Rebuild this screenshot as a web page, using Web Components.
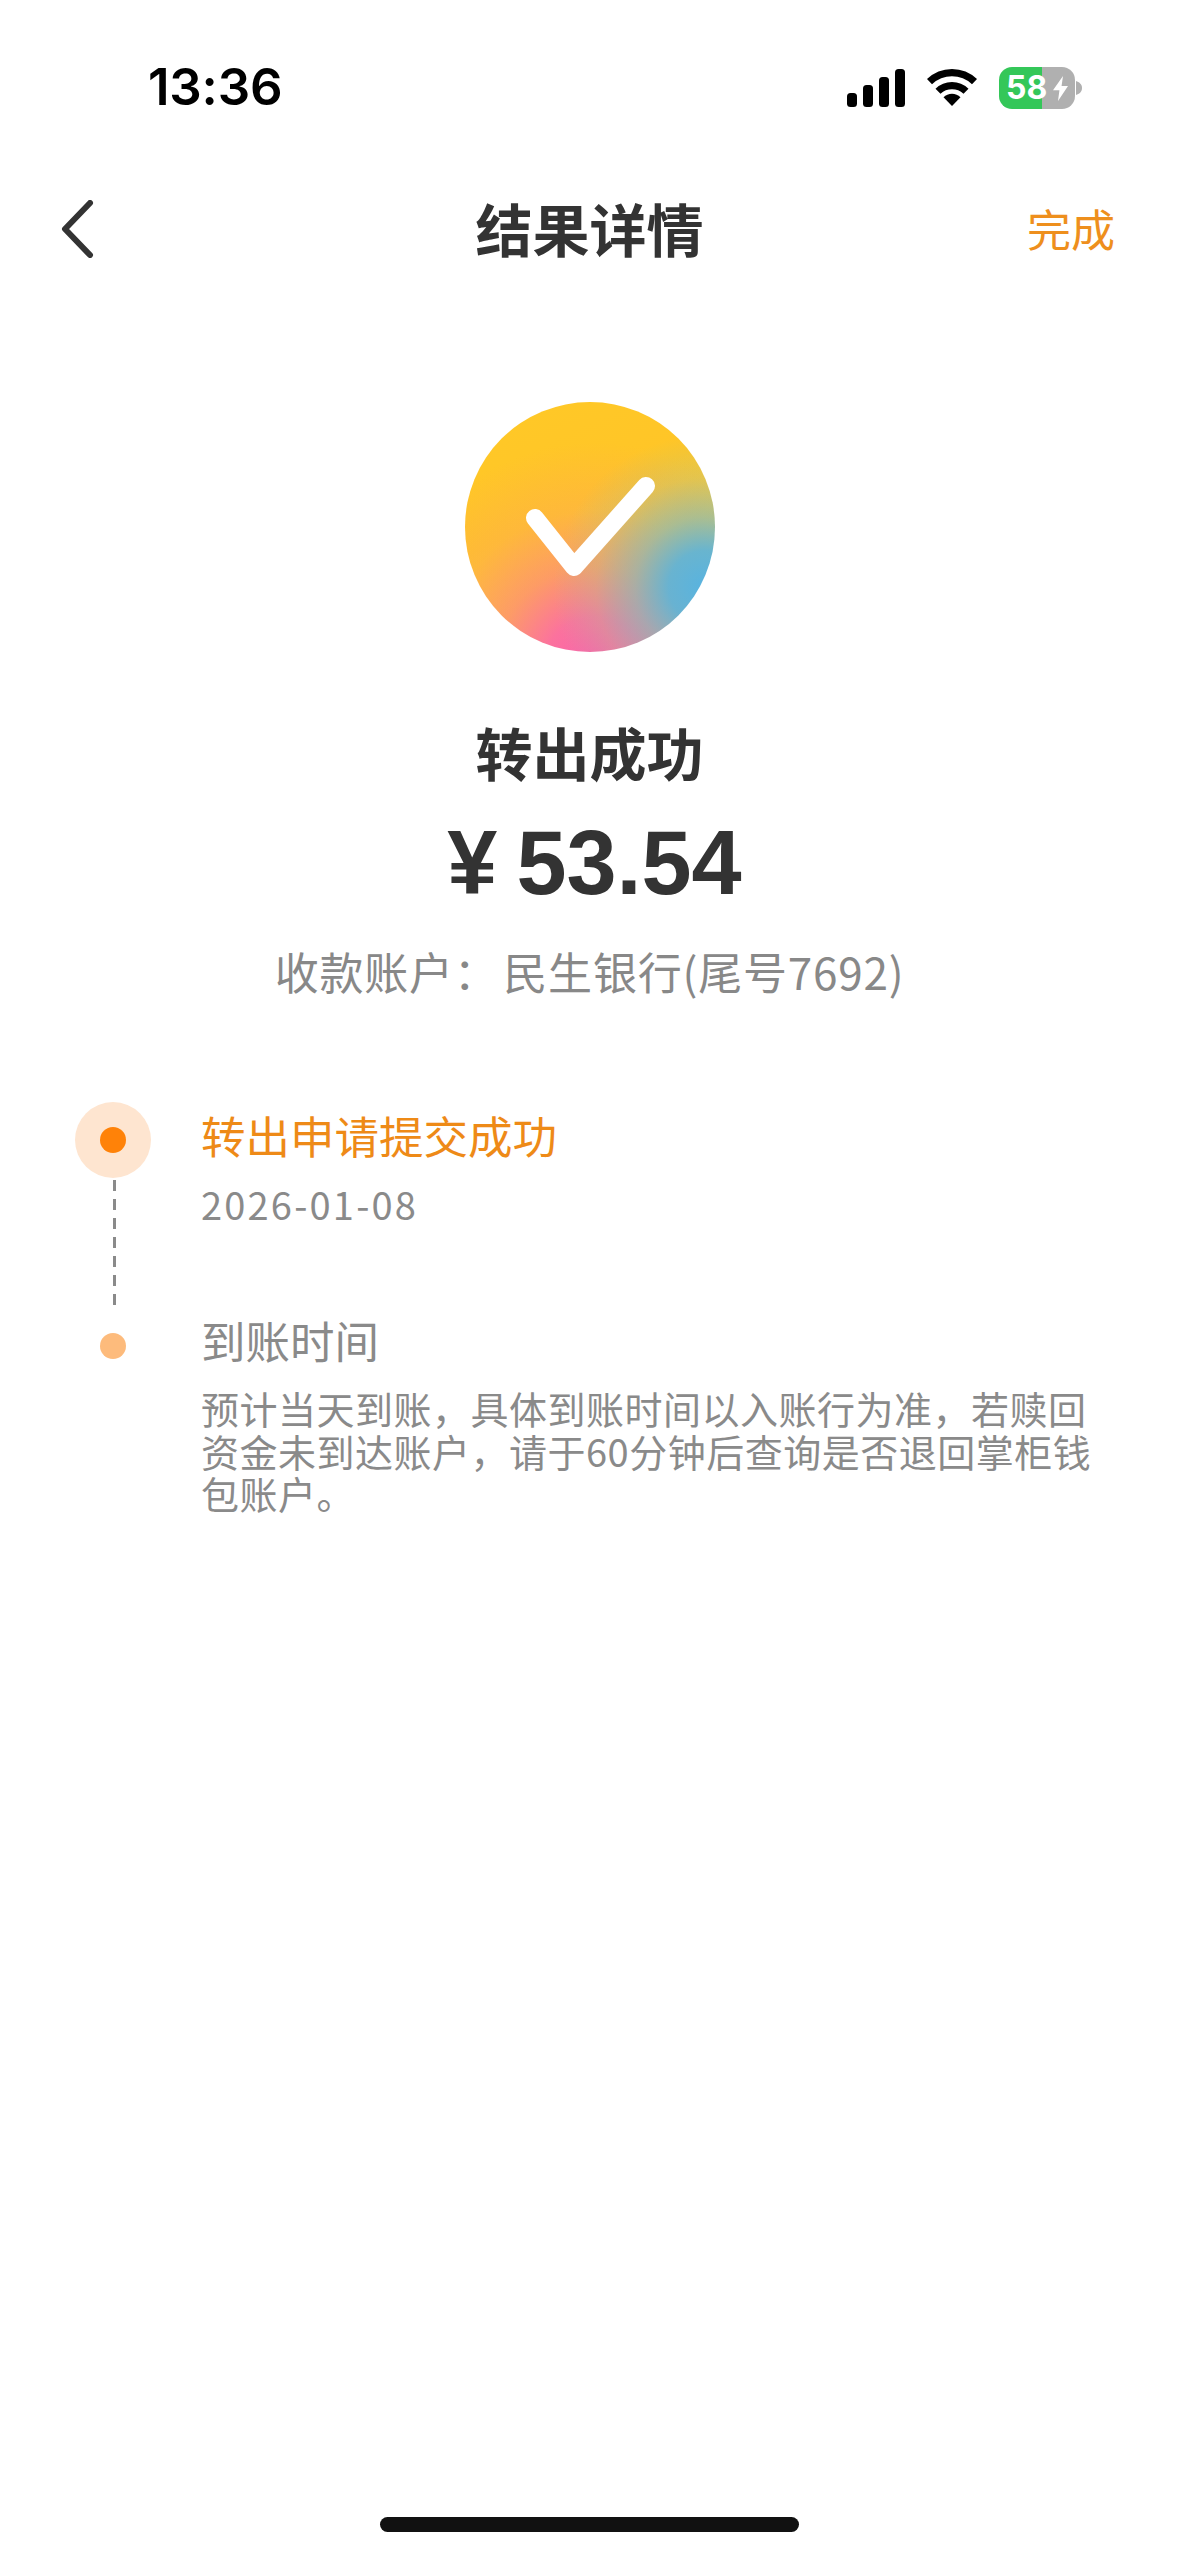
<!DOCTYPE html>
<html lang="zh">
<head>
<meta charset="utf-8">
<title>结果详情</title>
<style>
  html, body { margin: 0; background: #fff; }
  body {
    width: 1179px;
    height: 2556px;
    overflow: hidden;
    display: flex;
    flex-direction: column;
    font-family: "Noto Sans CJK SC", "Liberation Sans", sans-serif;
  }
</style>
</head>
<body>
<status-bar time="13:36" level="58"></status-bar>
<nav-bar title="结果详情" action="完成"></nav-bar>
<result-summary status="转出成功" amount="53.54" account="收款账户&#xFF1A; 民生银行(尾号7692)"></result-summary>
<progress-list>
  <progress-step active title="转出申请提交成功">2026-01-08</progress-step>
  <progress-step title="到账时间" note="预计当天到账&#xFF0C;具体到账时间以入账行为准&#xFF0C;若赎回资金未到达账户&#xFF0C;请于60分钟后查询是否退回掌柜钱包账户。"></progress-step>
</progress-list>
<home-indicator></home-indicator>

<script>
class StatusBar extends HTMLElement {
  connectedCallback() {
    const time = this.getAttribute("time") || "";
    const level = this.getAttribute("level") || "";
    this.attachShadow({ mode: "open" }).innerHTML = `
      <style>
        :host {
          display: flex;
          justify-content: space-between;
          height: 172px;
          box-sizing: border-box;
          padding: 57px 97px 0 148px;
          font-family: Inter, "Liberation Sans", sans-serif;
        }
        .time { font-size: 51px; line-height: 60px; font-weight: 600; color: #000; letter-spacing: -.2px; }
        .icons { display: flex; gap: 22px; height: 60px; align-items: flex-start; padding-top: 10px; box-sizing: border-box; }
        svg { display: block; }
        .battery {
          position: relative;
          width: 76px;
          height: 42px;
          border-radius: 13px;
          overflow: hidden;
          background: linear-gradient(90deg, #34c759 0 43px, #b0b0b0 43px);
          color: #fff;
          font-size: 32px;
          font-weight: 700;
          line-height: 42px;
          padding-left: 7px;
          box-sizing: border-box;
        }
        .battery svg { position: absolute; left: 54px; top: 9px; }
        .wrap { display: flex; align-items: center; gap: 1px; }
      </style>
      <div class="time">${time}</div>
      <div class="icons">
        <svg width="58" height="38" viewBox="0 0 58 38" style="margin-top:2px">
          <rect x="0" y="24" width="10" height="14" rx="3.5"/>
          <rect x="16" y="16" width="10" height="22" rx="3.5"/>
          <rect x="32" y="8" width="10" height="30" rx="3.5"/>
          <rect x="48" y="0" width="10" height="38" rx="3.5"/>
        </svg>
        <svg width="50" height="37" viewBox="0 0 50 37" style="margin-top:2px">
          <path d="M25 37 16.500 28.300a12 12 0 0 1 17 0Z"/>
          <path d="M25 13a24 24 0 0 1 16.500 6.700l-5 5.100a17 17 0 0 0-23 0l-5-5.100A24 24 0 0 1 25 13Z"/>
          <path d="M25 0a36 36 0 0 1 25 10.100l-5 5.100a29 29 0 0 0-40 0L0 10.100A36 36 0 0 1 25 0Z"/>
        </svg>
        <div class="wrap">
          <div class="battery">${level}
            <svg width="15" height="25" viewBox="2 0 21 30" preserveAspectRatio="none"><path fill="#fff" d="M16 0 2 17h9l-2 13 14-18h-9Z"/></svg>
          </div>
          <svg width="6" height="14" viewBox="0 0 6 14"><path fill="#b0b0b0" d="M0 0c3 1 6 3 6 7s-3 6-6 7Z"/></svg>
        </div>
      </div>
    `;
  }
}

class NavBar extends HTMLElement {
  connectedCallback() {
    this.attachShadow({ mode: "open" }).innerHTML = `
      <style>
        :host {
          display: grid;
          grid-template-columns: 1fr auto 1fr;
          align-items: center;
          height: 114px;
          padding: 0 64px;
          font-family: "Noto Sans CJK SC", "Liberation Sans", sans-serif;
        }
        svg { display: block; margin-left: -4px; }
        .title { font-size: 57px; font-weight: 700; color: #333; line-height: 70px; margin-top: -5px; }
        .action { justify-self: end; font-size: 44px; color: #ee8f1d; line-height: 60px; margin-top: -2px; }
      </style>
      <svg width="34" height="58" viewBox="0 0 34 58"><path d="M30 3 5 29l25 26" fill="none" stroke="#333" stroke-width="6" stroke-linecap="round" stroke-linejoin="round"/></svg>
      <div class="title">${this.getAttribute("title")}</div>
      <div class="action">${this.getAttribute("action")}</div>
    `;
  }
}

class ResultSummary extends HTMLElement {
  connectedCallback() {
    this.attachShadow({ mode: "open" }).innerHTML = `
      <style>
        :host {
          display: flex;
          flex-direction: column;
          align-items: center;
          padding-top: 116px;
          font-family: "Noto Sans CJK SC", "Liberation Sans", sans-serif;
        }
        .badge {
          width: 250px;
          height: 250px;
          border-radius: 50%;
          background:
            radial-gradient(circle at 96% 74%, #58b3e0 0, rgba(92,180,218,.92) 12%, rgba(120,188,195,.62) 23%, rgba(165,195,150,.3) 36%, rgba(180,195,130,0) 50%),
            radial-gradient(circle at 52% 106%, #fb60ae 0, rgba(251,104,168,.9) 17%, rgba(252,125,135,.6) 34%, rgba(252,150,110,.27) 53%, rgba(252,160,90,0) 76%),
            linear-gradient(155deg, #ffc927 0, #ffc527 42%, #fdd24e 100%);
        }
        svg { display: block; }
        .status { margin-top: 63px; font-size: 57px; font-weight: 700; line-height: 72px; color: #333; }
        .amount {
          margin-top: 26px;
          padding-left: 10px;
          font-family: "Liberation Sans", sans-serif;
          font-size: 90px;
          font-weight: 700;
          line-height: 100px;
          color: #333;
          word-spacing: -6px;
        }
        .account { margin-top: 30px; font-size: 44px; line-height: 56px; color: #888; letter-spacing: .8px; word-spacing: -6px; }
      </style>
      <div class="badge">
        <svg width="250" height="250" viewBox="0 0 250 250"><path d="M70 116l39 49 72-81" fill="none" stroke="#fff" stroke-width="18" stroke-linecap="round" stroke-linejoin="round"/></svg>
      </div>
      <div class="status">${this.getAttribute("status")}</div>
      <div class="amount">¥ ${this.getAttribute("amount")}</div>
      <div class="account">${this.getAttribute("account")}</div>
    `;
  }
}

class ProgressList extends HTMLElement {
  connectedCallback() {
    this.attachShadow({ mode: "open" }).innerHTML = `
      <style>
        :host {
          display: flex;
          flex-direction: column;
          padding: 103px 84px 0 75px;
          font-family: "Noto Sans CJK SC", "Liberation Sans", sans-serif;
        }
      </style>
      <slot></slot>
    `;
  }
}

class ProgressStep extends HTMLElement {
  connectedCallback() {
    const active = this.hasAttribute("active");
    const note = this.getAttribute("note");
    this.attachShadow({ mode: "open" }).innerHTML = `
      <style>
        :host { display: grid; grid-template-columns: 76px 1fr; column-gap: 50px; }
        .rail { display: flex; flex-direction: column; align-items: center; }
        .dot { flex: none; width: 76px; height: 76px; display: flex; align-items: center; justify-content: center; border-radius: 50%; }
        .dot i { width: 26px; height: 26px; border-radius: 50%; background: #fdbb7c; }
        :host([active]) .dot { background: #fee5d0; }
        :host([active]) .dot i { background: #ff8208; }
        .line {
          width: 3px;
          height: 128px;
          margin-top: 2px;
          margin-left: 2px;
          background: repeating-linear-gradient(#8a8a8a 0 11px, transparent 11px 19px);
        }
        .title { font-size: 44.500px; line-height: 60px; color: #8a8a8a; margin-top: 2px; }
        :host([active]) .title { color: #ee8a17; margin-top: 3px; }
        .body { font-size: 38px; line-height: 42.500px; color: #8a8a8a; margin-top: 17px; letter-spacing: .5px; }
        .date { font-size: 38px; line-height: 50px; color: #8a8a8a; margin-top: 14px; letter-spacing: 2.200px; }
      </style>
      <div class="rail">
        <div class="dot"><i></i></div>
        ${active ? `<div class="line"></div>` : ""}
      </div>
      <div>
        <div class="title">${this.getAttribute("title")}</div>
        ${note ? `<div class="body">${note}</div>` : `<div class="date"><slot></slot></div>`}
      </div>
    `;
  }
}

class HomeIndicator extends HTMLElement {
  connectedCallback() {
    this.attachShadow({ mode: "open" }).innerHTML = `
      <style>
        :host { display: flex; justify-content: center; margin-top: auto; padding-bottom: 24px; }
        div { width: 419px; height: 15px; border-radius: 8px; background: #111; }
      </style>
      <div></div>
    `;
  }
}

customElements.define("status-bar", StatusBar);
customElements.define("nav-bar", NavBar);
customElements.define("result-summary", ResultSummary);
customElements.define("progress-list", ProgressList);
customElements.define("progress-step", ProgressStep);
customElements.define("home-indicator", HomeIndicator);
</script>
</body>
</html>
